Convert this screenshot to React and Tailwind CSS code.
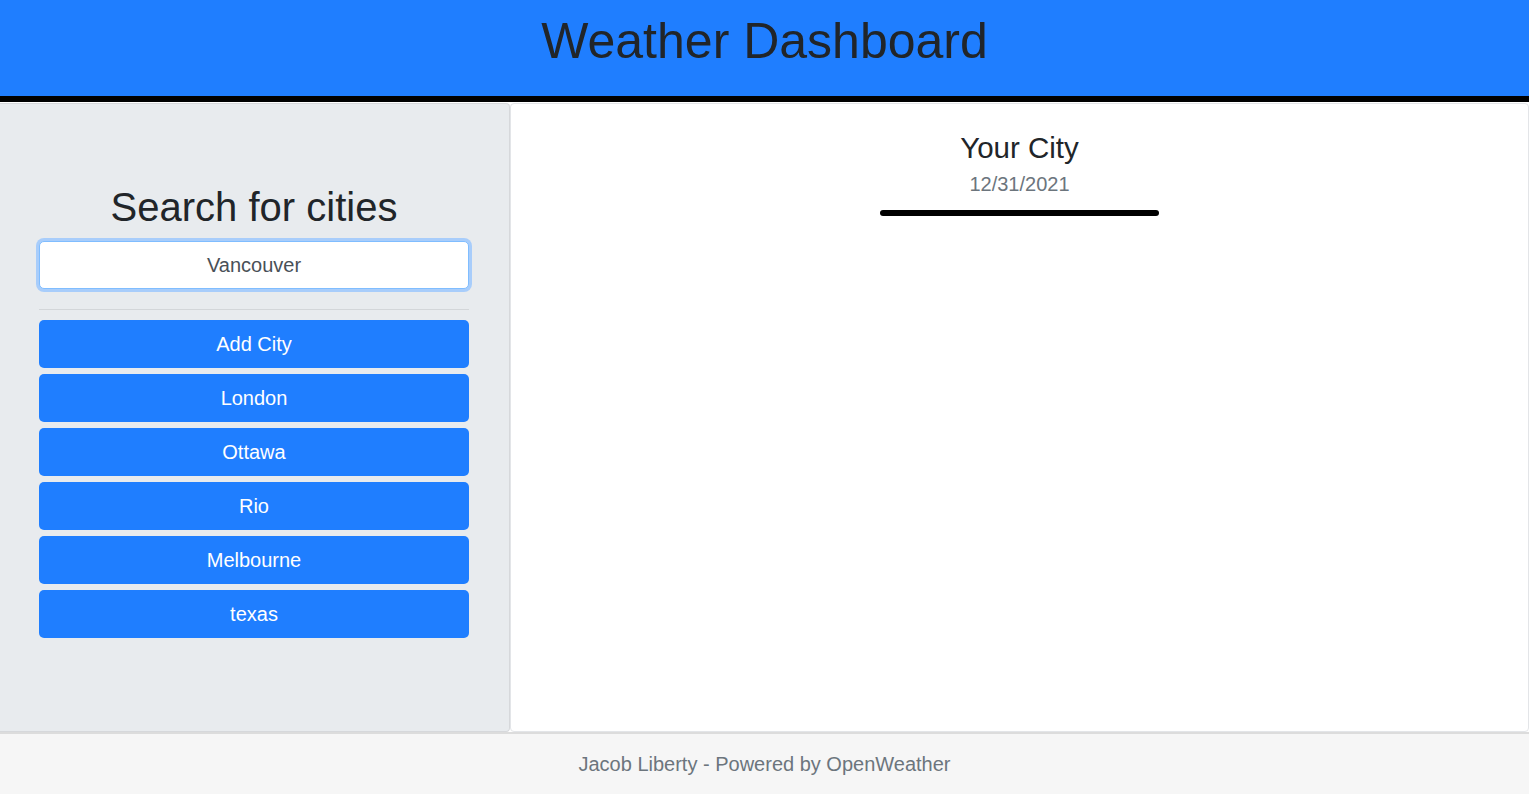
const cities = ["London", "Ottawa", "Rio", "Melbourne", "texas"];

const App = () => {
  return (
    <div className="min-h-screen bg-white text-[#212529] font-['Liberation_Sans',Arial,sans-serif]">
      {/* Header */}
      <header className="h-[102px] bg-[#1f7eff] border-b-[6px] border-black flex justify-center pt-[11px]">
        <h1 className="text-[50px] leading-[1.2]">Weather Dashboard</h1>
      </header>

      <main className="flex h-[630px] pt-[1px]">
        {/* Search column */}
        <section className="w-[510px] bg-[#e8ebee] border-y border-r border-[#d6d8db] rounded-r-[4px] pl-[39px] pr-[40px] pt-[79px]">
          <h2 className="text-[40px] leading-[1.2] text-center mb-[10px]">Search for cities</h2>
          <input
            type="text"
            defaultValue="Vancouver"
            className="w-full h-[48px] bg-white border border-[#80bdff] rounded-[5px] text-center text-[20px] text-[#495057] outline-none ring-[3px] ring-[#a8cdfb]"
          />
          <hr className="mt-[20px] mb-[10px] border-t border-[#d3d6d9]" />
          <div className="flex flex-col gap-[6px]">
            <button className="h-[48px] bg-[#1f7eff] text-white text-[20px] rounded-[5px]">Add City</button>
            {cities.map((city) => (
              <button key={city} className="h-[48px] bg-[#1f7eff] text-white text-[20px] rounded-[5px]">
                {city}
              </button>
            ))}
          </div>
        </section>

        {/* Forecast column */}
        <section className="flex-1 border border-[#e3e5e8] rounded-[4px] flex flex-col items-center pt-[26px]">
          <h3 className="text-[29.5px] leading-[1.2]">Your City</h3>
          <p className="text-[20px] leading-[1.2] text-[#6c757d] mt-[7px]">12/31/2021</p>
          <div className="w-[279px] h-[6px] bg-black rounded-full mt-[14px]"></div>
        </section>
      </main>

      <footer className="h-[62px] bg-[#f6f6f6] border-t-2 border-[#dcdcdc] flex items-center justify-center">
        <p className="text-[20px] text-[#6c757d]">Jacob Liberty - Powered by OpenWeather</p>
      </footer>
    </div>
  );
};

export default App;
